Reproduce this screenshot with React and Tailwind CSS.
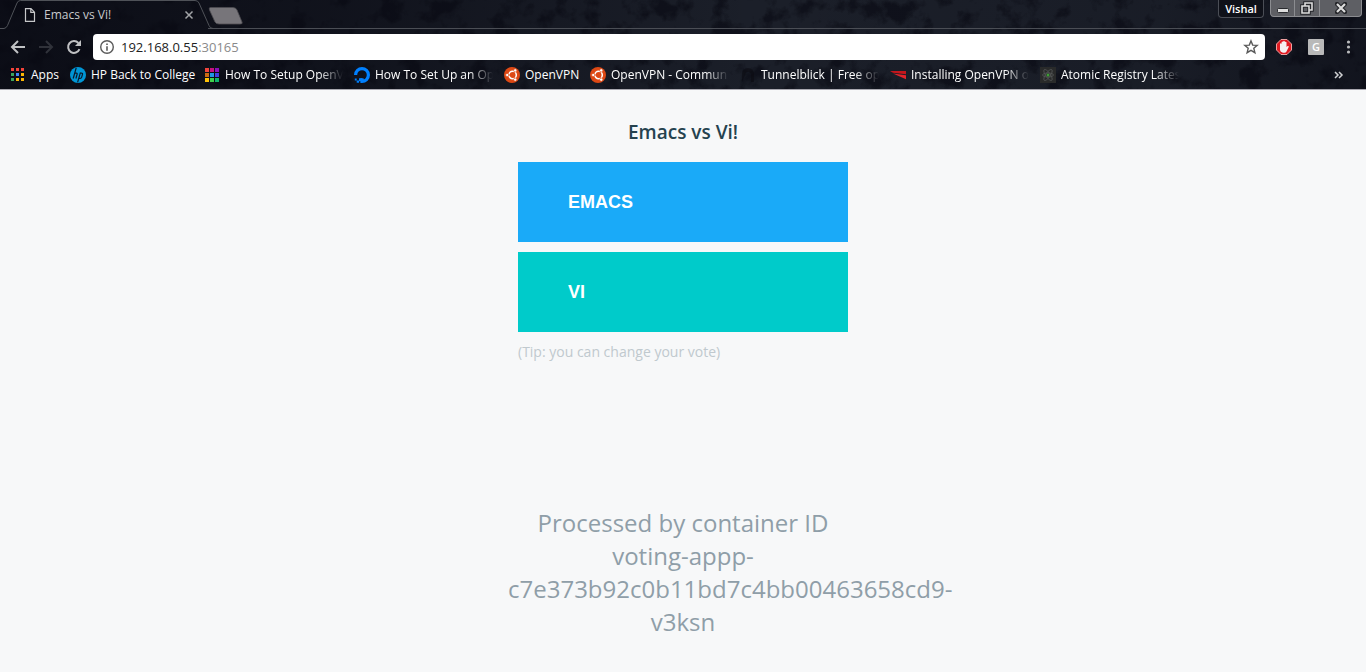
import React from "react";

const fade = "[mask-image:linear-gradient(to_right,black_calc(100%-24px),transparent)]";

function Squares({ colors, size, className }) {
  return (
    <svg className={className} viewBox="0 0 14 14" width="14" height="14" shapeRendering="crispEdges" aria-hidden="true">
      {colors.map((c, i) => (
        <rect key={i} x={(i % 3) * 5} y={Math.floor(i / 3) * 5} width={size} height={size} fill={c} />
      ))}
    </svg>
  );
}

function HpIcon() {
  return (
    <svg width="16" height="16" viewBox="0 0 16 16" className="shrink-0" aria-hidden="true">
      <circle cx="8" cy="8" r="8" fill="#0096d6" />
      <g stroke="#0b1a2a" strokeWidth="1.2" fill="none">
        <path d="M6.2 0.8 3.2 11.5M4.6 6.2h1.7q1.1 0 .8 1.1L5.9 11.5" />
        <path d="M10.4 5.6 7.6 15.4M9.9 6.2h1.7q1.2 0 .9 1.1l-.9 3.1q-.3 1-1.4 1H8.6" />
      </g>
    </svg>
  );
}

function OceanIcon() {
  return (
    <svg width="16" height="16" viewBox="0 0 16 16" className="shrink-0" aria-hidden="true">
      <path d="M1.600 8A6.400 6.400 0 1 1 8 14.400V11.200" fill="none" stroke="#0080ff" strokeWidth="3.2" />
      <path d="M5 11.200h3v3H5zM2.700 13.500H5v2.200H2.700zM.8 11.600h1.900v1.900H.8z" fill="#0080ff" />
    </svg>
  );
}

function UbuntuIcon() {
  return (
    <svg width="16" height="16" viewBox="0 0 16 16" className="shrink-0" aria-hidden="true">
      <circle cx="8" cy="8" r="8" fill="#dd4814" />
      <circle cx="8.6" cy="8" r="3.7" fill="none" stroke="#fff" strokeWidth="1.5" />
      <g stroke="#dd4814" strokeWidth="0.9">
        <path d="M8.600 8H2M8.600 8 11.900 2.300M8.600 8 11.900 13.700" />
      </g>
      <g fill="#fff" stroke="#dd4814" strokeWidth="0.6">
        <circle cx="3.2" cy="8" r="1.6" />
        <circle cx="11.2" cy="3.4" r="1.6" />
        <circle cx="11.2" cy="12.6" r="1.6" />
      </g>
    </svg>
  );
}

function TunnelIcon() {
  return (
    <svg width="16" height="16" viewBox="0 0 16 16" className="shrink-0" aria-hidden="true">
      <path d="M2 15V7a6 6 0 0 1 12 0v8h-3V8a3 3 0 0 0-6 0z" fill="#0b0c12" opacity="0.6" />
    </svg>
  );
}

function RedIcon() {
  return (
    <svg width="16" height="16" viewBox="0 0 16 16" className="shrink-0" aria-hidden="true">
      <path d="M0 4H16V7.300L3 5.800Z" fill="#c4161c" />
      <path d="M3 6.600 16 8.300V12.300Z" fill="#e3242b" />
    </svg>
  );
}

function AtomIcon() {
  return (
    <svg width="16" height="16" viewBox="0 0 16 16" className="shrink-0" aria-hidden="true">
      <rect width="16" height="16" fill="#292a2a" />
      <g fill="none" stroke="#515353" strokeWidth="0.9">
        <ellipse cx="8" cy="8" rx="6.500" ry="2.300" transform="rotate(55 8 8)" />
        <ellipse cx="8" cy="8" rx="6.500" ry="2.300" transform="rotate(-55 8 8)" />
        <ellipse cx="8" cy="8" rx="5.500" ry="2" />
      </g>
      <circle cx="8" cy="8" r="1.500" fill="#3f9c35" />
    </svg>
  );
}

const appColors = ["#f4433a", "#f4433a", "#f4433a", "#3aa55d", "#4285f4", "#fbb505", "#3aa55d", "#fbb505", "#fbb505"];
const rainbow = ["#f0443c", "#c8107e", "#8a10b8", "#c96a12", "#2196e3", "#3f3fe0", "#ffc107", "#3fd14b", "#10b36b"];

const bookmarks = [
  { label: "HP Back to College", icon: <HpIcon />, width: "w-[134px]", clip: false },
  { label: "How To Setup OpenV", icon: <Squares colors={rainbow} size={4} className="mx-px shrink-0" />, width: "w-[150px]", clip: true },
  { label: "How To Set Up an Op", icon: <OceanIcon />, width: "w-[150px]", clip: true },
  { label: "OpenVPN", icon: <UbuntuIcon />, width: "w-[86px]", clip: false },
  { label: "OpenVPN - Commun", icon: <UbuntuIcon />, width: "w-[150px]", clip: true },
  { label: "Tunnelblick | Free ope", icon: <TunnelIcon />, width: "w-[150px]", clip: true },
  { label: "Installing OpenVPN o", icon: <RedIcon />, width: "w-[150px]", clip: true },
  { label: "Atomic Registry Lates", icon: <AtomIcon />, width: "w-[150px]", clip: true },
];

function Texture() {
  return (
    <svg className="absolute inset-0 h-full w-full" aria-hidden="true">
      <defs>
        <filter id="grunge" x="0" y="0" width="100%" height="100%" colorInterpolationFilters="sRGB">
          <feTurbulence type="fractalNoise" baseFrequency="0.045" numOctaves="6" seed="8" />
          <feColorMatrix values="0 0 0 0 0.04  0 0 0 0 0.045  0 0 0 0 0.08  5 0 0 0 -2.5" />
        </filter>
        <linearGradient id="shade">
          <stop offset="0" stopColor="#080912" stopOpacity="0.8" />
          <stop offset="0.25" stopColor="#080912" stopOpacity="0.55" />
          <stop offset="0.55" stopColor="#080912" stopOpacity="0" />
          <stop offset="0.85" stopColor="#080912" stopOpacity="0.1" />
          <stop offset="1" stopColor="#080912" stopOpacity="0.5" />
        </linearGradient>
      </defs>
      <rect width="100%" height="100%" fill="#1b1f29" />
      <rect width="100%" height="100%" filter="url(#grunge)" opacity="0.65" />
      <rect width="100%" height="100%" fill="url(#shade)" />
    </svg>
  );
}

function TabStrip() {
  return (
    <div className="relative flex h-7 items-start">
      <div className="relative flex h-7 w-[208px] items-center pl-6 pr-[14px]">
        <svg className="absolute left-0 top-0" width="246" height="29" viewBox="0 0 246 29" aria-hidden="true">
          <path d="M0 28.500H4Q6.500 28 7.500 25.500L17 3Q18 .5 20.500 .5H195Q198 .5 199 3L209 25.500Q210 28.500 213 28.500" fill="none" stroke="#4f5258" />
          <path d="M210.500 7.500H233Q236 7.500 237 10L242 22Q243 24 240 24H219Q216 24 215 22L209.500 10Q208.500 7.500 210.500 7.500Z" fill="#77757a" stroke="#4e4d52" strokeWidth="0.8" />
        </svg>
        <svg width="12" height="14" viewBox="0 0 12 14" className="mt-px shrink-0" aria-hidden="true">
          <path d="M1.500 .7H7L10.500 4.200V13.300H1.500ZM6.800 .7V4.400H10.500" fill="none" stroke="#c6c7c9" strokeWidth="1.200" />
        </svg>
        <span className="ml-2 mt-px grow text-[12px] leading-4 text-[#c8cacd]">Emacs vs Vi!</span>
        <button aria-label="Close tab" className="relative mt-px">
          <svg width="10" height="10" viewBox="0 0 10 10">
            <path d="M1.500 1.500 8.500 8.500M8.500 1.500 1.500 8.500" stroke="#a3a5a8" strokeWidth="1.500" />
          </svg>
        </button>
      </div>
      <div className="mt-[28px] h-px grow bg-[#4b4e55]" />
      <div className="absolute right-0 top-0 flex items-start gap-[6px]">
        <button className="h-[18px] w-[46px] rounded-b border border-t-0 border-[#4b4e56] bg-[#0f1119] text-[11px] font-semibold leading-4 text-white">
          Vishal
        </button>
        <div className="mr-1 flex h-[17px] overflow-hidden rounded-b border border-t-0 border-[#8b8c90] bg-[#5e5f64]">
          <button aria-label="Minimize" className="flex w-6 items-center justify-center border-r border-[#8b8c90]">
            <svg width="12" height="14" viewBox="0 0 12 14"><rect x=".5" y="7.500" width="11" height="4" rx="1" fill="#ddd" stroke="#292a2e" /></svg>
          </button>
          <button aria-label="Restore" className="flex w-[25px] items-center justify-center border-r border-[#8b8c90]">
            <svg width="14" height="14" viewBox="0 0 14 14" fill="none">
              <path d="M5 5V2H12V9H9M2 5H9V12H2Z" stroke="#25262a" strokeWidth="3.600" />
              <path d="M5 5V2H12V9H9M2 5H9V12H2Z" stroke="#ddd" strokeWidth="1.600" />
            </svg>
          </button>
          <button aria-label="Close" className="flex w-[41px] items-center justify-center">
            <svg width="12" height="12" viewBox="0 0 12 12">
              <path d="M2 2 10 10M10 2 2 10" stroke="#25262a" strokeWidth="4.400" strokeLinecap="square" />
              <path d="M2 2 10 10M10 2 2 10" stroke="#ddd" strokeWidth="2.200" />
            </svg>
          </button>
        </div>
      </div>
    </div>
  );
}

function Toolbar() {
  return (
    <div className="mt-[6px] flex h-[26px] items-center">
      <nav className="flex w-[93px] items-center gap-3 pl-[10px]">
        <button aria-label="Back">
          <svg width="16" height="16" viewBox="0 0 16 16"><path d="M15 8H2.500M8 2 2 8 8 14" fill="none" stroke="#c0c1c3" strokeWidth="2" /></svg>
        </button>
        <button aria-label="Forward" disabled>
          <svg width="16" height="16" viewBox="0 0 16 16"><path d="M1 8H13.500M8 2 14 8 8 14" fill="none" stroke="#30323a" strokeWidth="2" /></svg>
        </button>
        <button aria-label="Reload">
          <svg width="16" height="16" viewBox="0 0 16 16">
            <path d="M13.500 10.200A5.900 5.900 0 1 1 12.400 4" fill="none" stroke="#c0c1c3" strokeWidth="2" />
            <path d="M15 1V7H9Z" fill="#c0c1c3" />
          </svg>
        </button>
      </nav>
      <div className="flex h-[26px] grow items-center rounded-sm bg-white px-[6px]">
        <svg width="16" height="16" viewBox="0 0 16 16" className="shrink-0" aria-hidden="true">
          <circle cx="8" cy="8" r="6.300" fill="none" stroke="#5a5a5a" strokeWidth="1.400" />
          <path d="M7.200 4.400H8.800V6H7.200ZM7.200 7.200H8.800V11.700H7.200Z" fill="#5a5a5a" />
        </svg>
        <a href="http://192.168.0.55:30165" className="ml-[6px] grow text-[13px] leading-5 text-[#222]">
          192.168.0.55<span className="text-[#8a8a8a]">:30165</span>
        </a>
        <button aria-label="Bookmark this page">
          <svg width="16" height="16" viewBox="0 0 16 16">
            <path d="M8 1.900 9.700 6.100 14.200 6.400 10.800 9.300 11.900 13.700 8 11.300 4.100 13.700 5.200 9.300 1.800 6.400 6.300 6.100Z" fill="none" stroke="#5a5a5a" strokeWidth="1.400" />
          </svg>
        </button>
      </div>
      <div className="flex w-[101px] items-center pl-[11px]">
        <button aria-label="Ad blocker">
          <svg width="16" height="16" viewBox="0 0 16 16">
            <path d="M5 .5H11L15.500 5V11L11 15.500H5L.5 11V5Z" fill="#e01b22" stroke="#eda0a0" />
            <path d="M4 9V4.800Q4.800 3.800 5.600 4.800V3Q6.400 2 7.200 3V2.200Q8 1.400 8.800 2.200V3Q9.700 2.200 10.500 3.200V8L11.600 7Q13.200 6.700 12.700 8L10.500 12.500Q9.800 13.800 8.500 13.800H7Q4.200 13.300 4 11Z" fill="#f6f1f1" />
          </svg>
        </button>
        <button className="ml-4 h-4 w-4 rounded-[1px] bg-[#b9b9b9] text-[11px] font-semibold leading-4 text-white">G</button>
        <button aria-label="Menu" className="ml-4">
          <svg width="16" height="16" viewBox="0 0 16 16" fill="#b9babc">
            <circle cx="8.500" cy="3" r="1.600" /><circle cx="8.500" cy="8" r="1.600" /><circle cx="8.500" cy="13" r="1.600" />
          </svg>
        </button>
      </div>
    </div>
  );
}

function BookmarkBar() {
  return (
    <nav className="flex h-[29px] items-center overflow-hidden pl-[11px] text-[12px] leading-4 text-white">
      <a href="#apps" className="flex w-[59px] shrink-0 items-center gap-[6px]">
        <Squares colors={appColors} size={3} className="shrink-0" />
        Apps
      </a>
      {bookmarks.map((b) => (
        <a key={b.label} href="#bookmark" className={`flex shrink-0 items-center gap-[5px] ${b.width}`}>
          {b.icon}
          <span className={b.clip ? `w-[118px] overflow-hidden whitespace-nowrap ${fade}` : "whitespace-nowrap"}>{b.label}</span>
        </a>
      ))}
      <button aria-label="More bookmarks" className="ml-auto mr-[22px]">
        <svg width="10" height="10" viewBox="0 0 10 10"><path d="M1 2 4 5 1 8M5 2 8 5 5 8" fill="none" stroke="#d0d1d3" strokeWidth="1.500" /></svg>
      </button>
    </nav>
  );
}

export default function App() {
  return (
    <div className="min-h-screen bg-[#f7f8f9] font-['Open_Sans','Noto_Sans',sans-serif]">
      <header className="relative border-b border-[#a9a8b0]">
        <Texture />
        <div className="relative">
          <TabStrip />
          <Toolbar />
          <BookmarkBar />
        </div>
      </header>
      <main className="flex flex-col items-center pt-7">
        <h1 className="text-[19px] font-semibold leading-7 text-[#25424f]">Emacs vs Vi!</h1>
        <form className="mt-4 flex w-[330px] flex-col gap-[10px] font-['Liberation_Sans',Arial,sans-serif]" onSubmit={(e) => e.preventDefault()}>
          <button name="vote" value="a" className="h-20 bg-[#1aaaf8] pl-[50px] text-left text-[18px] font-bold text-white">EMACS</button>
          <button name="vote" value="b" className="h-20 bg-[#00cbca] pl-[50px] text-left text-[18px] font-bold text-white">VI</button>
        </form>
        <p className="mt-[10px] w-[330px] text-[14px] leading-5 text-[#c0c9ce]">(Tip: you can change your vote)</p>
        <p className="mt-36 w-[350px] pb-8 text-center text-[24px] leading-[33px] text-[#8f9ea8]">
          Processed by container ID voting-appp-c7e373b92c0b11bd7c4bb00463658cd9-v3ksn
        </p>
      </main>
    </div>
  );
}
